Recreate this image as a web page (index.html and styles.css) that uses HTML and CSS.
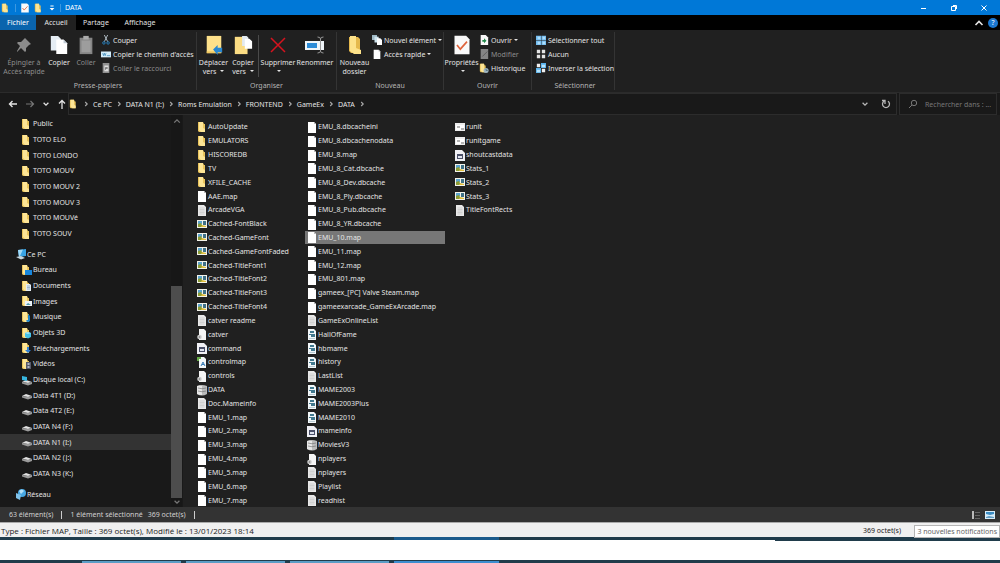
FILE: index.html
```html
<!DOCTYPE html>
<html lang="fr">
<head>
<meta charset="utf-8">
<title>DATA</title>
<link rel="stylesheet" href="styles.css">
</head>
<body>
<svg class="sprite" aria-hidden="true">
  <symbol id="folder" viewBox="0 0 10 12" preserveAspectRatio="xMinYMid"><path fill="#e9c45c" d="M1 1h5l1 2h1v8H2l-1-1z"/><path fill="#fde596" d="M2 1h4v6l2 1v3H4L2 9z"/></symbol>
  <symbol id="file" viewBox="0 0 10 12"><path fill="#fff" d="M1 1h6l2 2v9H1z"/><path fill="#bbb" d="M7 1l2 2H7z"/></symbol>
  <symbol id="text" viewBox="0 0 10 12"><path fill="#e8e8e8" d="M1 1h6l2 2v9H1z"/><path stroke="#b8b8b8" stroke-width=".5" d="M2.500 4h5M2.500 5.500h5M2.500 7h5M2.500 8.500h5M2.500 10h5"/></symbol>
  <symbol id="ini" viewBox="0 0 10 12"><path fill="#f5f5f5" d="M2 1h5l2 2v9H2z"/><circle cx="2.500" cy="9" r="2.300" fill="#ccc"/><circle cx="2.500" cy="9" r=".8" fill="#777"/></symbol>
  <symbol id="image" viewBox="0 0 10 12"><path fill="#f2f2ea" d="M0 2h10v8H0z"/><path fill="#5ba3cc" d="M1 3h4v3H1z"/><path fill="#3f7188" d="M6 3h3v4H6z"/><path fill="#8b9b35" d="M1 6l3-1 2 4H1z"/><path fill="#e0bd3c" d="M5 7l4 1v1H4z"/></symbol>
  <symbol id="dat" viewBox="0 0 10 12"><path fill="#f0f0f5" d="M0 1h7l3 3v8H0z"/><path fill="#4b5069" d="M2 5h6v5H2z"/><path fill="#dfe3ee" d="M3 7h4v2H3z"/></symbol>
  <symbol id="xml" viewBox="0 0 10 12"><path fill="#f4f8fa" d="M2 1h5l2 2v9H2z"/><path fill="#65aa47" d="M0 1h4v2H2v2H0z"/><path fill="none" stroke="#367bb7" d="M4 10l2-4 2 4M5 8.500h2"/></symbol>
  <symbol id="db" viewBox="0 0 10 12"><path fill="#bbb" d="M0 2q5-2 10 0v8q-5 3-10 0z"/><path fill="#e6e6e6" d="M0 2q3-1 5 0v9q-3 0-5-1z"/><path fill="none" stroke="#777" stroke-width=".7" d="M1 4q4 1.500 8 0M1 7q4 1.500 8 0"/></symbol>
  <symbol id="html" viewBox="0 0 10 12"><path fill="#f3f8fa" d="M1 1h6l2 2v9H1z"/><path fill="#42798f" d="M3 3h4v2H3zM2 6h6v1H2zM4 7h4v2H4z"/><path fill="#a0b8c2" d="M2 10h6v.7H2z"/></symbol>
  <symbol id="bat" viewBox="0 0 10 12"><path fill="#ededed" d="M0 2h10v8H0z"/><path fill="#fff" d="M1 4h8v5H1z"/><path fill="#b5b5b5" d="M2 5h3v2H2zM6 7h3v2H6z"/></symbol>
  <symbol id="pc" viewBox="0 0 12 12"><path fill="#38a4e6" d="M3 2l8-1v7l-7 1z"/><path fill="#9fd8f5" d="M3 2l5-.6L5 8l-1 1z"/><path fill="#c9d7df" d="M1 9l5-1 4 2-4 1.500z"/></symbol>
  <symbol id="desk" viewBox="0 0 12 12"><use href="#folder" width="10" height="12"/><path fill="#1787dd" d="M4 6h7v5H4z"/></symbol>
  <symbol id="docs" viewBox="0 0 12 12"><use href="#folder" width="10" height="12"/><path fill="#e6edf4" d="M5 4h4l1 1v6H5z"/><path stroke="#6f93b3" stroke-width=".6" d="M6 6h3M6 7.500h3M6 9h3"/></symbol>
  <symbol id="pics" viewBox="0 0 12 12"><use href="#folder" width="10" height="12"/><path fill="#eef3f7" d="M4 6h7v5H4z"/><path fill="#4c9aac" d="M5 10l2-2 3 2z"/></symbol>
  <symbol id="music" viewBox="0 0 12 12"><use href="#folder" width="10" height="12"/><path fill="#1b83cc" d="M7 3l2 2v5q-2 2-4 0 0-1 2-1z"/></symbol>
  <symbol id="cube" viewBox="0 0 12 12"><use href="#folder" width="10" height="12"/><path fill="#46c2e8" d="M7 5l3 1v4l-3 1.500L4 10V6z"/><path fill="#a7e8f8" d="M7 5l3 1-3 1-3-1z"/></symbol>
  <symbol id="down" viewBox="0 0 12 12"><use href="#folder" width="10" height="12"/><path fill="#2f7fd2" d="M6 5h2v3h2l-3 3-3-3h2z"/></symbol>
  <symbol id="video" viewBox="0 0 12 12"><use href="#folder" width="10" height="12"/><path fill="#555969" d="M5 4h5v7H5z"/><path fill="#aeb3c4" d="M6.500 5h2v2h-2zM6.500 8h2v2h-2z"/></symbol>
  <symbol id="drive" viewBox="0 0 12 12"><path fill="#e2e2e2" d="M1 7l4-2 6 2-4 1z"/><path fill="#9b9b9b" d="M1 7l6 1 4-1v2l-4 1.500-6-2z"/></symbol>
  <symbol id="cdrive" viewBox="0 0 12 12"><use href="#drive" y="1" width="12" height="12"/><path fill="#37b6df" d="M1 2l5 1v4L1 6z"/></symbol>
  <symbol id="net" viewBox="0 0 12 12"><circle cx="7" cy="5" r="4" fill="#47a8e4"/><path fill="#b4e0f8" d="M4 3q3-3 5 0L6 6z"/><path fill="#7fc2ea" d="M1 5l5 2-1 5-4-2z"/></symbol>
  <symbol id="check" viewBox="0 0 20 24"><path fill="#fafafa" d="M1 1h14l4 4v18H1z"/><path fill="none" stroke="#df643c" stroke-width="2" d="M4 12l4 5 8-9"/></symbol>
  <symbol id="copy" viewBox="0 0 20 22"><path fill="#e5edf4" d="M1 1h8l3 3v13H1z"/><path fill="#fff" d="M7 5h8l4 4v12H7z"/><path fill="#bfcbd5" d="M15 5l4 4h-4z"/></symbol>
  <symbol id="paste" viewBox="0 0 16 22"><path fill="#858585" d="M1 3h14v18H1z"/><path fill="#aaa" d="M5 1h6v4H5z"/><path fill="#9d9d9d" d="M3 6h10v13H3z"/></symbol>
  <symbol id="pin" viewBox="0 0 16 16"><path fill="#8b8b8b" d="M9 1l6 6-2 1-3 3v3l-1 1-4-4-4 4v-1l3-5-3-3 1-1h3l3-3z"/></symbol>
  <symbol id="scissors" viewBox="0 0 12 12"><path stroke="#c7d4dc" d="M4 0l4 8M8 0L4 8"/><circle cx="3.500" cy="9.500" r="1.500" fill="none" stroke="#288bd0"/><circle cx="8.500" cy="9.500" r="1.500" fill="none" stroke="#288bd0"/></symbol>
  <symbol id="path" viewBox="0 0 12 12"><path fill="#d5edfa" d="M0 3h12v7H0z"/><path fill="none" stroke="#2b7eb2" stroke-width=".8" d="M2 5l1 3 1-3 1 3 1-3M7 8h4"/></symbol>
  <symbol id="shortcut" viewBox="0 0 12 12"><path fill="#909090" d="M2 0h8v12H2z"/><path fill="#ddd" d="M4 3h5v7H4z"/><path fill="#666" d="M5 8V5h3v2H6v1z"/></symbol>
  <symbol id="moveto" viewBox="0 0 20 22"><path fill="#fde08a" d="M2 1h16v19H2z"/><path fill="#efc75f" d="M2 18h16v2H2z"/><path fill="#2786d1" d="M9 16l5-5v3h5v5h-5v3z"/></symbol>
  <symbol id="copyto" viewBox="0 0 20 22"><path fill="#fbdc83" d="M1 2h14v19H1z"/><path fill="#e2eaf1" d="M9 1h5l2 2v9H9z"/><path fill="#fff" d="M12 4h5l3 3v8h-8z"/></symbol>
  <symbol id="delete" viewBox="0 0 16 16"><path stroke="#d5131f" stroke-width="1.500" d="M1 1l14 14M15 1L1 15"/></symbol>
  <symbol id="rename" viewBox="0 0 20 18"><path fill="#eef4f8" d="M0 5h19v9H0z"/><path fill="#2a8bd7" d="M2 7h10v5H2z"/><path fill="none" stroke="#999" d="M12.500 1q3 0 3 2v12q0 2-3 2M18.500 1q-3 0-3 2v12q0 2 3 2"/></symbol>
  <symbol id="newfolder" viewBox="0 0 14 20"><path fill="#e5b94d" d="M1 2h9l2 2v14H3l-2-2z"/><path fill="#fde28a" d="M2 1h6v12l5 2v4H6l-4-3z"/></symbol>
  <symbol id="newitem" viewBox="0 0 12 12"><path fill="#9fb9c5" d="M0 0h6v6H0z"/><path fill="#cfe4ee" d="M3 2h5v7H3z"/><path fill="#fff" d="M6 4h4l2 2v6H6z"/></symbol>
  <symbol id="open" viewBox="0 0 12 12"><path fill="#f8f8f8" d="M2 0h6l3 3v9H2z"/><path fill="#218a4b" d="M4 6h2V4l3 3-3 3V8H4z"/></symbol>
  <symbol id="edit" viewBox="0 0 12 12"><path fill="#858585" d="M2 0h9v12H2z"/><path stroke="#555" d="M4 9l6-6"/></symbol>
  <symbol id="history" viewBox="0 0 12 12"><use href="#folder" width="10" height="12"/><circle cx="8.500" cy="9" r="3" fill="#9db4c0"/><path fill="none" stroke="#31505e" stroke-width=".7" d="M8.500 7v2h2"/></symbol>
  <symbol id="all" viewBox="0 0 12 12"><path fill="#74bdf0" d="M0 1h6v5H0zM6.500 1H12v5H6.500zM0 6.500h6V12H0zM6.500 6.500H12V12H6.500z"/><path fill="#aeddf9" d="M2 2h3v3H2zM8 2h3v3H8zM2 8h3v3H2zM8 8h3v3H8z"/></symbol>
  <symbol id="none" viewBox="0 0 12 12"><path fill="#e4e4e4" d="M1 1h4v4H1zM7 1h4v4H7zM1 7h4v4H1zM7 7h4v4H7z"/></symbol>
  <symbol id="invert" viewBox="0 0 12 12"><path fill="#eee" d="M1 1h4v4H1zM7 7h4v4H7z"/><path fill="#59b2ec" d="M6 0h6v6H6zM0 6h6v6H0z"/><path fill="#b9e2f8" d="M7 2h4v3H7zM1 8h4v3H1z"/></symbol>
  <symbol id="left" viewBox="0 0 10 10"><path fill="none" stroke="currentColor" stroke-width="1.400" d="M9 5H1.500M4.500 2l-3 3 3 3"/></symbol>
  <symbol id="right" viewBox="0 0 10 10"><path fill="none" stroke="currentColor" stroke-width="1.200" d="M1 5h7.500M5.500 2l3 3-3 3"/></symbol>
  <symbol id="up" viewBox="0 0 10 10"><path fill="none" stroke="currentColor" stroke-width="1.300" d="M5 10V1.500M2 4.500l3-3 3 3"/></symbol>
  <symbol id="chevdown" viewBox="0 0 10 10"><path fill="none" stroke="currentColor" stroke-width="1.600" d="M2 3.500l3 3 3-3"/></symbol>
  <symbol id="caret" viewBox="0 0 10 10"><path fill="currentColor" d="M2 5h6L5 8zM3 2h4v1H3z"/></symbol>
  <symbol id="chevup" viewBox="0 0 10 10"><path fill="none" stroke="currentColor" stroke-width="1.600" d="M1.500 7L5 3.500 8.500 7"/></symbol>
  <symbol id="chevright" viewBox="0 0 10 10"><path fill="none" stroke="currentColor" stroke-width="1.400" d="M4 2.500L6.500 5 4 7.500"/></symbol>
  <symbol id="refresh" viewBox="0 0 10 10"><path fill="none" stroke="currentColor" stroke-width="1.300" d="M7 2.200a3.500 3.500 0 1 1-4 0M1 1.500h3V5"/></symbol>
  <symbol id="search" viewBox="0 0 10 10"><circle cx="6" cy="4" r="2.700" fill="none" stroke="currentColor"/><path stroke="currentColor" d="M4 6L1 9"/></symbol>
  <symbol id="min" viewBox="0 0 8 8"><path stroke="currentColor" d="M1 4.500h5"/></symbol>
  <symbol id="restore" viewBox="0 0 8 8"><path fill="none" stroke="currentColor" d="M1.500 2.500h4v4h-4zM3 1.500h3.500V5"/></symbol>
  <symbol id="close" viewBox="0 0 8 8"><path stroke="currentColor" d="M1.500 1.500l5 5M6.500 1.500l-5 5"/></symbol>
  <symbol id="details" viewBox="0 0 10 10"><path fill="#bbb" d="M1 1h2v8H1z"/><path stroke="#666" d="M4 2.500h5M4 5.500h5M4 8.500h5"/></symbol>
  <symbol id="thumbs" viewBox="0 0 10 10"><path fill="#d8ecf8" d="M0 1h10v8H0z"/><path fill="#3a8cc4" d="M1 2h8v2L5 5 1 4z"/><path fill="#5f9cc4" d="M1 7l3-1 5 1v1H1z"/></symbol>
</svg>

<header class="titlebar">
  <svg class="ic-mid"><use href="#folder"/></svg><i class="tick"></i>
  <button class="plain" aria-label="Propriétés"><svg class="ic-mid"><use href="#check"/></svg></button>
  <button class="plain" aria-label="Nouveau dossier"><svg class="ic-mid"><use href="#folder"/></svg></button>
  <button class="plain" aria-label="Personnaliser"><svg class="ic-small"><use href="#caret"/></svg></button><i class="tick"></i>
  <h1>DATA</h1>
  <div class="window-buttons">
    <button class="plain" aria-label="Réduire"><svg class="ic-small"><use href="#min"/></svg></button>
    <button class="plain" aria-label="Restaurer"><svg class="ic-small"><use href="#restore"/></svg></button>
    <button class="plain" aria-label="Fermer"><svg class="ic-small"><use href="#close"/></svg></button>
  </div>
</header>

<nav class="tabs">
  <button class="tab tab-file">Fichier</button>
  <button class="tab tab-active">Accueil</button>
  <button class="tab">Partage</button>
  <button class="tab tab-wide">Affichage</button>
  <span class="tabs-end">
    <button class="plain" aria-label="Réduire le ruban"><svg class="ic-mid"><use href="#chevup"/></svg></button>
    <button class="plain help" aria-label="Aide">?</button>
  </span>
</nav>

<section class="ribbon">
  <div class="group g-clip">
    <div class="tools">
      <button class="big off w-pin"><svg class="ic-big pin"><use href="#pin"/></svg><span>Épingler à<br>Accès rapide</span></button>
      <button class="big w-copy"><svg class="ic-big"><use href="#copy"/></svg><span>Copier</span></button>
      <button class="big off w-paste"><svg class="ic-big"><use href="#paste"/></svg><span>Coller</span></button>
      <div class="stack">
        <button class="small"><svg class="ic-mid"><use href="#scissors"/></svg>Couper</button>
        <button class="small"><svg class="ic-mid"><use href="#path"/></svg>Copier le chemin d'accès</button>
        <button class="small off"><svg class="ic-mid"><use href="#shortcut"/></svg>Coller le raccourci</button>
      </div>
    </div>
    <div class="caption">Presse-papiers</div>
  </div>
  <div class="group g-org">
    <div class="tools">
      <button class="big w-move"><svg class="ic-big"><use href="#moveto"/></svg><span>Déplacer<br>vers <i class="arrow"></i></span></button>
      <button class="big w-copyto"><svg class="ic-big"><use href="#copyto"/></svg><span>Copier<br>vers <i class="arrow"></i></span></button>
      <i class="divider"></i>
      <button class="big w-delete"><svg class="ic-big mid"><use href="#delete"/></svg><span>Supprimer<br><i class="arrow"></i></span></button>
      <button class="big w-rename"><svg class="ic-big"><use href="#rename"/></svg><span>Renommer</span></button>
    </div>
    <div class="caption">Organiser</div>
  </div>
  <div class="group g-new">
    <div class="tools">
      <button class="big w-new"><svg class="ic-big"><use href="#newfolder"/></svg><span>Nouveau<br>dossier</span></button>
      <div class="stack">
        <button class="small"><svg class="ic-mid"><use href="#newitem"/></svg>Nouvel élément<i class="arrow"></i></button>
        <button class="small"><svg class="ic-mid"><use href="#file"/></svg>Accès rapide<i class="arrow"></i></button>
      </div>
    </div>
    <div class="caption">Nouveau</div>
  </div>
  <div class="group g-open">
    <div class="tools">
      <button class="big w-new"><svg class="ic-big"><use href="#check"/></svg><span>Propriétés<br><i class="arrow"></i></span></button>
      <div class="stack">
        <button class="small"><svg class="ic-mid"><use href="#open"/></svg>Ouvrir<i class="arrow"></i></button>
        <button class="small off"><svg class="ic-mid"><use href="#edit"/></svg>Modifier</button>
        <button class="small"><svg class="ic-mid"><use href="#history"/></svg>Historique</button>
      </div>
    </div>
    <div class="caption">Ouvrir</div>
  </div>
  <div class="group g-select">
    <div class="tools">
      <div class="stack">
        <button class="small"><svg class="ic-mid"><use href="#all"/></svg>Sélectionner tout</button>
        <button class="small"><svg class="ic-mid"><use href="#none"/></svg>Aucun</button>
        <button class="small"><svg class="ic-mid"><use href="#invert"/></svg>Inverser la sélection</button>
      </div>
    </div>
    <div class="caption">Sélectionner</div>
  </div>
</section>

<div class="address">
  <div class="history">
    <button class="plain" aria-label="Précédent"><svg class="ic-mid"><use href="#left"/></svg></button>
    <button class="plain dim" aria-label="Suivant"><svg class="ic-mid"><use href="#right"/></svg></button>
    <button class="plain" aria-label="Emplacements récents"><svg class="ic-small"><use href="#chevdown"/></svg></button>
    <button class="plain" aria-label="Dossier parent"><svg class="ic-mid"><use href="#up"/></svg></button>
  </div>
  <div class="crumbs">
    <svg class="ic-mid"><use href="#folder"/></svg><svg class="sep"><use href="#chevright"/></svg>
    <a href="#">Ce PC</a><svg class="sep"><use href="#chevright"/></svg>
    <a href="#">DATA N1 (I:)</a><svg class="sep"><use href="#chevright"/></svg>
    <a href="#">Roms Emulation</a><svg class="sep"><use href="#chevright"/></svg>
    <a href="#">FRONTEND</a><svg class="sep"><use href="#chevright"/></svg>
    <a href="#">GameEx</a><svg class="sep"><use href="#chevright"/></svg>
    <a href="#">DATA</a><svg class="sep"><use href="#chevright"/></svg>
    <span class="crumb-tools">
      <button class="plain" aria-label="Adresses précédentes"><svg class="ic-small"><use href="#chevdown"/></svg></button>
      <button class="plain" aria-label="Actualiser"><svg class="ic-mid"><use href="#refresh"/></svg></button>
    </span>
  </div>
  <label class="search"><svg class="ic-mid"><use href="#search"/></svg><input type="text" aria-label="Rechercher" placeholder="Rechercher dans : ..."></label>
</div>

<main class="main">
  <nav class="side">
    <div class="tree">
      <a href="#"><svg class="ic-tree"><use href="#folder"/></svg>Public</a>
      <a href="#"><svg class="ic-tree"><use href="#folder"/></svg>TOTO ELO</a>
      <a href="#"><svg class="ic-tree"><use href="#folder"/></svg>TOTO LONDO</a>
      <a href="#"><svg class="ic-tree"><use href="#folder"/></svg>TOTO MOUV</a>
      <a href="#"><svg class="ic-tree"><use href="#folder"/></svg>TOTO MOUV 2</a>
      <a href="#"><svg class="ic-tree"><use href="#folder"/></svg>TOTO MOUV 3</a>
      <a href="#"><svg class="ic-tree"><use href="#folder"/></svg>TOTO MOUVé</a>
      <a href="#"><svg class="ic-tree"><use href="#folder"/></svg>TOTO SOUV</a>
      <a href="#" class="root"><svg class="ic-tree"><use href="#pc"/></svg>Ce PC</a>
      <a href="#"><svg class="ic-tree"><use href="#desk"/></svg>Bureau</a>
      <a href="#"><svg class="ic-tree"><use href="#docs"/></svg>Documents</a>
      <a href="#"><svg class="ic-tree"><use href="#pics"/></svg>Images</a>
      <a href="#"><svg class="ic-tree"><use href="#music"/></svg>Musique</a>
      <a href="#"><svg class="ic-tree"><use href="#cube"/></svg>Objets 3D</a>
      <a href="#"><svg class="ic-tree"><use href="#down"/></svg>Téléchargements</a>
      <a href="#"><svg class="ic-tree"><use href="#video"/></svg>Vidéos</a>
      <a href="#"><svg class="ic-tree"><use href="#cdrive"/></svg>Disque local (C:)</a>
      <a href="#"><svg class="ic-tree"><use href="#drive"/></svg>Data 4T1 (D:)</a>
      <a href="#"><svg class="ic-tree"><use href="#drive"/></svg>Data 4T2 (E:)</a>
      <a href="#"><svg class="ic-tree"><use href="#drive"/></svg>DATA N4 (F:)</a>
      <a href="#" class="current"><svg class="ic-tree"><use href="#drive"/></svg>DATA N1 (I:)</a>
      <a href="#"><svg class="ic-tree"><use href="#drive"/></svg>DATA N2 (J:)</a>
      <a href="#"><svg class="ic-tree"><use href="#drive"/></svg>DATA N3 (K:)</a>
      <a href="#" class="root"><svg class="ic-tree"><use href="#net"/></svg>Réseau</a>
    </div>
    <div class="scroll"><svg class="ic-small"><use href="#chevup"/></svg><i class="track"></i><i class="thumb"></i><svg class="ic-small"><use href="#chevdown"/></svg></div>
  </nav>
  <ul class="files">
    <li><svg class="ic-file"><use href="#folder"/></svg>AutoUpdate</li>
    <li><svg class="ic-file"><use href="#folder"/></svg>EMULATORS</li>
    <li><svg class="ic-file"><use href="#folder"/></svg>HISCOREDB</li>
    <li><svg class="ic-file"><use href="#folder"/></svg>TV</li>
    <li><svg class="ic-file"><use href="#folder"/></svg>XFILE_CACHE</li>
    <li><svg class="ic-file"><use href="#file"/></svg>AAE.map</li>
    <li><svg class="ic-file"><use href="#text"/></svg>ArcadeVGA</li>
    <li><svg class="ic-file"><use href="#image"/></svg>Cached-FontBlack</li>
    <li><svg class="ic-file"><use href="#image"/></svg>Cached-GameFont</li>
    <li><svg class="ic-file"><use href="#image"/></svg>Cached-GameFontFaded</li>
    <li><svg class="ic-file"><use href="#image"/></svg>Cached-TitleFont1</li>
    <li><svg class="ic-file"><use href="#image"/></svg>Cached-TitleFont2</li>
    <li><svg class="ic-file"><use href="#image"/></svg>Cached-TitleFont3</li>
    <li><svg class="ic-file"><use href="#image"/></svg>Cached-TitleFont4</li>
    <li><svg class="ic-file"><use href="#text"/></svg>catver readme</li>
    <li><svg class="ic-file"><use href="#ini"/></svg>catver</li>
    <li><svg class="ic-file"><use href="#dat"/></svg>command</li>
    <li><svg class="ic-file"><use href="#xml"/></svg>controlmap</li>
    <li><svg class="ic-file"><use href="#ini"/></svg>controls</li>
    <li><svg class="ic-file"><use href="#db"/></svg>DATA</li>
    <li><svg class="ic-file"><use href="#text"/></svg>Doc.Mameinfo</li>
    <li><svg class="ic-file"><use href="#file"/></svg>EMU_1.map</li>
    <li><svg class="ic-file"><use href="#file"/></svg>EMU_2.map</li>
    <li><svg class="ic-file"><use href="#file"/></svg>EMU_3.map</li>
    <li><svg class="ic-file"><use href="#file"/></svg>EMU_4.map</li>
    <li><svg class="ic-file"><use href="#file"/></svg>EMU_5.map</li>
    <li><svg class="ic-file"><use href="#file"/></svg>EMU_6.map</li>
    <li><svg class="ic-file"><use href="#file"/></svg>EMU_7.map</li>
    <li><svg class="ic-file"><use href="#file"/></svg>EMU_8.dbcacheini</li>
    <li><svg class="ic-file"><use href="#file"/></svg>EMU_8.dbcachenodata</li>
    <li><svg class="ic-file"><use href="#file"/></svg>EMU_8.map</li>
    <li><svg class="ic-file"><use href="#file"/></svg>EMU_8_Cat.dbcache</li>
    <li><svg class="ic-file"><use href="#file"/></svg>EMU_8_Dev.dbcache</li>
    <li><svg class="ic-file"><use href="#file"/></svg>EMU_8_Ply.dbcache</li>
    <li><svg class="ic-file"><use href="#file"/></svg>EMU_8_Pub.dbcache</li>
    <li><svg class="ic-file"><use href="#file"/></svg>EMU_8_YR.dbcache</li>
    <li class="selected"><svg class="ic-file"><use href="#file"/></svg>EMU_10.map</li>
    <li><svg class="ic-file"><use href="#file"/></svg>EMU_11.map</li>
    <li><svg class="ic-file"><use href="#file"/></svg>EMU_12.map</li>
    <li><svg class="ic-file"><use href="#file"/></svg>EMU_801.map</li>
    <li><svg class="ic-file"><use href="#file"/></svg>gameex_[PC] Valve Steam.map</li>
    <li><svg class="ic-file"><use href="#file"/></svg>gameexarcade_GameExArcade.map</li>
    <li><svg class="ic-file"><use href="#text"/></svg>GameExOnlineList</li>
    <li><svg class="ic-file"><use href="#html"/></svg>HallOfFame</li>
    <li><svg class="ic-file"><use href="#html"/></svg>hbmame</li>
    <li><svg class="ic-file"><use href="#html"/></svg>history</li>
    <li><svg class="ic-file"><use href="#text"/></svg>LastList</li>
    <li><svg class="ic-file"><use href="#html"/></svg>MAME2003</li>
    <li><svg class="ic-file"><use href="#html"/></svg>MAME2003Plus</li>
    <li><svg class="ic-file"><use href="#html"/></svg>MAME2010</li>
    <li><svg class="ic-file"><use href="#dat"/></svg>mameinfo</li>
    <li><svg class="ic-file"><use href="#db"/></svg>MoviesV3</li>
    <li><svg class="ic-file"><use href="#ini"/></svg>nplayers</li>
    <li><svg class="ic-file"><use href="#text"/></svg>nplayers</li>
    <li><svg class="ic-file"><use href="#text"/></svg>Playlist</li>
    <li><svg class="ic-file"><use href="#text"/></svg>readhist</li>
    <li><svg class="ic-file"><use href="#bat"/></svg>runit</li>
    <li><svg class="ic-file"><use href="#bat"/></svg>runitgame</li>
    <li><svg class="ic-file"><use href="#dat"/></svg>shoutcastdata</li>
    <li><svg class="ic-file"><use href="#image"/></svg>Stats_1</li>
    <li><svg class="ic-file"><use href="#image"/></svg>Stats_2</li>
    <li><svg class="ic-file"><use href="#image"/></svg>Stats_3</li>
    <li><svg class="ic-file"><use href="#text"/></svg>TitleFontRects</li>
  </ul>
</main>

<footer class="status">
  <span>63 élément(s)</span><i class="bar"></i><span>1 élément sélectionné</span><span class="size">369 octet(s)</span><i class="bar"></i>
  <span class="views">
    <button class="plain" aria-label="Détails"><svg class="ic-mid"><use href="#details"/></svg></button>
    <button class="plain" aria-label="Grandes icônes"><svg class="ic-mid"><use href="#thumbs"/></svg></button>
  </span>
</footer>
<div class="info">
  <span class="info-text">Type : Fichier MAP, Taille : 369 octet(s), Modifié le : 13/01/2023 18:14</span>
  <span>369 octet(s)</span>
  <div class="tip" role="tooltip">3 nouvelles notifications</div>
</div>
<div class="taskbar">
  <div class="edge"><i class="task-top"></i></div>
  <div class="cover"><i class="cover-left"></i><i class="cover-right"></i></div>
  <div class="edge edge-low"><i class="task"></i><i class="task"></i><i class="task"></i><i class="task task-on"></i></div>
</div>
</body>
</html>
```
FILE: styles.css
```css
* { box-sizing: border-box; }
body {
  margin: 0;
  min-height: 100vh;
  display: flex;
  flex-direction: column;
  background: #202020;
  color: #e4e4e4;
  font: 7px/9px "Noto Sans", "Open Sans", sans-serif;
  white-space: nowrap;
}
.sprite { display: none; }
svg { flex: none; display: block; }
a { color: inherit; text-decoration: none; }
button, input { font: inherit; color: inherit; background: none; border: 0; padding: 0; margin: 0; }
.plain { display: flex; align-items: center; justify-content: center; }
.ic-tree { width: 12px; height: 12px; }
.ic-small { width: 8px; height: 8px; }
.ic-mid { width: 10px; height: 10px; }
.ic-file { width: 10px; height: 12px; }
.ic-big { width: 20px; height: 20px; }
.pin, .mid { padding: 2px; }

/* Title bar and tabs */
.titlebar { display: flex; align-items: center; gap: 4px; height: 15px; padding-left: 1px; background: #0078d7; color: #fff; }
.titlebar h1 { margin: 0; font-size: 7px; font-weight: 400; }
.tick { width: 1px; height: 8px; background: #3c98e0; }
.window-buttons { margin-left: auto; display: flex; gap: 22px; padding-right: 12px; }
.tabs { display: flex; height: 15px; background: #000; }
.tab { width: 40px; }
.tab-file { width: 36px; background: #0a64ad; color: #fff; }
.tab-active { background: #202020; }
.tab-wide { width: 48px; }
.tabs-end { margin-left: auto; display: flex; align-items: center; gap: 4px; padding-right: 2px; }
.help { width: 10px; height: 10px; border-radius: 50%; background: #1c78d0; color: #fff; }

/* Ribbon */
.ribbon { display: flex; height: 63px; padding: 2px 0; border-bottom: 1px solid #2b2b2b; }
.group { display: flex; flex-direction: column; justify-content: space-between; border-right: 1px solid #343434; }
.g-clip { width: 197px; }
.g-org { width: 140px; }
.g-new { width: 107px; }
.g-open { width: 88px; }
.g-select { width: 83px; padding-left: 4px; }
.tools { display: flex; align-items: flex-start; padding-top: 3px; }
.caption { text-align: center; color: #b4b4b4; }
.big { display: flex; flex-direction: column; align-items: center; gap: 3px; }
.off { color: #8d8d8d; }
.w-pin { width: 48px; }
.w-copy, .w-paste { width: 22px; }
.w-paste { margin: 0 4px 0 5px; }
.w-move { width: 33px; }
.w-copyto { width: 26px; }
.w-delete { width: 38px; }
.w-rename { width: 36px; }
.w-new { width: 35px; }
.divider { width: 1px; height: 42px; margin-left: 2px; background: #4a4a4a; }
.stack { display: flex; flex-direction: column; gap: 4px; }
.small { display: flex; align-items: center; gap: 2px; height: 10px; }
.arrow { display: inline-block; border: 2px solid transparent; border-top-color: #e4e4e4; border-bottom: 0; margin: 0 0 2px 2px; }
.small .arrow { margin: 0; }

/* Address bar */
.address { display: flex; align-items: stretch; height: 22px; background: #191919; }
.history { display: flex; align-items: center; gap: 7px; width: 68px; padding-left: 8px; }
.history .dim { color: #777; }
.crumbs { flex: 1; display: flex; align-items: center; border: 1px solid #2c2c2c; }
.sep { width: 8px; height: 8px; margin: 0 3px; color: #aaa; }
.crumb-tools { display: flex; gap: 12px; margin-left: auto; padding-right: 5px; color: #b8b8b8; }
.search { display: flex; align-items: center; gap: 7px; width: 98px; margin: 0 3px 0 2px; padding-left: 8px; border: 1px solid #2c2c2c; color: #777; }
.search input { flex: 1; min-width: 0; outline: 0; }
.search input::placeholder { color: #777; opacity: 1; }

/* Navigation pane and files */
.main { flex: 1; display: flex; }
.side { display: flex; width: 183px; background: #191919; }
.tree { flex: 1; display: flex; flex-direction: column; padding: 1px 0 5px; }
.tree a { flex: 1; display: flex; align-items: center; padding-left: 21px; }
.tree .root { margin-top: 5px; padding-left: 15px; }
.tree .current { background: #333; }
.scroll { display: flex; flex-direction: column; align-items: center; width: 11px; margin-right: 1px; padding: 2px 0 1px; background: #171717; color: #777; }
.track { flex: 160; }
.thumb { flex: 210; width: 11px; background: #4d4d4d; }
.files {
  flex: 1;
  display: grid;
  grid-auto-flow: column;
  grid-template-rows: repeat(28, 1fr);
  grid-template-columns: 102px 140px;
  column-gap: 8px;
  margin: 0;
  padding: 5px 0 0 12px;
  list-style: none;
  justify-content: start;
}
.files li { display: flex; align-items: center; gap: 1px; padding-left: 2px; }
.files .selected { background: #777; }

/* Status rows and taskbar */
.status { display: flex; align-items: center; gap: 8px; height: 15px; padding-left: 9px; background: #333; color: #d0d0d0; }
.bar { width: 1px; height: 8px; background: #ccc; }
.size { margin-left: -3px; }
.views { display: flex; gap: 4px; margin-left: auto; padding-right: 5px; }
.info { position: relative; display: flex; align-items: center; justify-content: space-between; height: 15px; padding: 0 99px 0 1px; border-top: 1px solid #aaa; background: #f0f0f0; color: #222; }
.info-text { font: 8px/9px "Open Sans", sans-serif; }
.tip { position: absolute; right: 0; top: 2px; padding: 1px 2px; border: 1px solid #b5b5b5; background: #fff; color: #666; z-index: 1; }
.taskbar { background: #203c4b; }
.edge { display: flex; height: 3px; padding-left: 394px; }
.task-top { width: 105px; background: #1b5b8c; }
.cover { display: flex; height: 20px; align-items: flex-end; }
.cover-left { width: 775px; height: 20px; background: #fff; }
.cover-right { flex: 1; height: 19px; background: #fff; }
.edge-low { padding: 1px 0 0 82px; gap: 5px; }
.task { width: 99px; background: #5b9dc6; }
.task-on { width: 105px; background: #3d8ed0; }
```
